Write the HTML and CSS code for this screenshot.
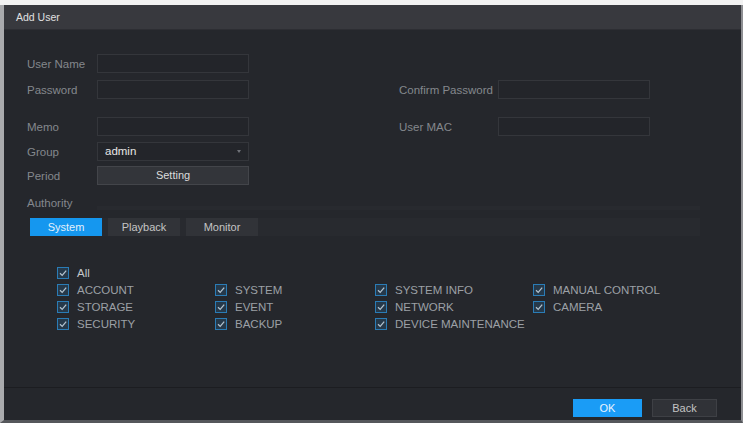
FILE: index.html
```html
<html>

<head>
    <link rel="stylesheet" href="styles.css">
</head>

<body>
    <div class="dialog">
        <div class="title">Add User</div>
        <div class="content">
            <div class="form">
                <div class="row r1">
                    <span class="lbl">User Name</span>
                    <span class="input"></span>
                </div>
                <div class="row r2">
                    <span class="lbl">Password</span>
                    <span class="input"></span>
                    <span class="lbl lbl-right">Confirm Password</span>
                    <span class="input"></span>
                </div>
                <div class="row r3">
                    <span class="lbl">Memo</span>
                    <span class="input"></span>
                    <span class="lbl lbl-right">User MAC</span>
                    <span class="input"></span>
                </div>
                <div class="row r4">
                    <span class="lbl">Group</span>
                    <span class="input select">admin<i class="arrow"></i></span>
                </div>
                <div class="row r5">
                    <span class="lbl">Period</span>
                    <span class="btn-setting">Setting</span>
                </div>
                <div class="row r6">
                    <span class="lbl">Authority</span>
                    <span class="auth-line"></span>
                </div>
            </div>

            <div class="tabs">
                <span class="tab active">System</span>
                <span class="tab">Playback</span>
                <span class="tab">Monitor</span>
            </div>

            <div class="checks">
                <label class="check all"><i class="box"></i>All</label>
                <label class="check"><i class="box"></i>ACCOUNT</label>
                <label class="check"><i class="box"></i>SYSTEM</label>
                <label class="check"><i class="box"></i>SYSTEM INFO</label>
                <label class="check"><i class="box"></i>MANUAL CONTROL</label>
                <label class="check"><i class="box"></i>STORAGE</label>
                <label class="check"><i class="box"></i>EVENT</label>
                <label class="check"><i class="box"></i>NETWORK</label>
                <label class="check"><i class="box"></i>CAMERA</label>
                <label class="check"><i class="box"></i>SECURITY</label>
                <label class="check"><i class="box"></i>BACKUP</label>
                <label class="check"><i class="box"></i>DEVICE MAINTENANCE</label>
            </div>

            <div class="footer">
                <span class="btn ok">OK</span>
                <span class="btn back">Back</span>
            </div>
        </div>
    </div>
</body>

</html>
```

FILE: styles.css
```css
body {
    margin: 0;
    background: #f2f2f2;
    font-family: 'Liberation Sans', Arial, sans-serif;
}

.dialog {
    height: 418px;
    margin-top: 5px;
    border-left: 4px solid #a9aaad;
    border-right: 2px solid #8d8e92;
    border-bottom: 3px solid #55575b;
    background: #25272c;
    display: flex;
    flex-direction: column;
    box-sizing: border-box;
}

.title {
    height: 24px;
    line-height: 24px;
    padding-left: 12px;
    background: #38393e;
    border-bottom: 1px solid #2d2e33;
    color: #e0e0e0;
    font-size: 10.5px;
}

.content {
    flex: 1;
    display: flex;
    flex-direction: column;
}

.form {
    padding-left: 23px;
}

.row {
    display: flex;
    align-items: center;
    height: 19px;
}

.r1 { margin-top: 24px; }
.r2 { margin-top: 7px; }
.r3 { margin-top: 18px; }
.r4 { margin-top: 6px; }
.r5 { margin-top: 5px; }
.r6 { margin-top: 8px; }

.lbl {
    width: 70px;
    color: #84878d;
    font-size: 11.5px;
}

.lbl-right {
    width: 99px;
    margin-left: 150px;
}

.input {
    width: 152px;
    height: 19px;
    box-sizing: border-box;
    border: 1px solid #34363b;
    background: #23252a;
}

.select {
    position: relative;
    padding-left: 7px;
    line-height: 17px;
    color: #e6e6e6;
    font-size: 11.5px;
}

.arrow {
    position: absolute;
    right: 7px;
    top: 7px;
    border-top: 3px solid #6f7278;
    border-left: 2px solid transparent;
    border-right: 2px solid transparent;
}

.btn-setting {
    width: 152px;
    height: 19px;
    box-sizing: border-box;
    border: 1px solid #43454a;
    background: #33353a;
    color: #dcdcdc;
    font-size: 11px;
    line-height: 17px;
    text-align: center;
}

.auth-line {
    width: 603px;
    height: 4px;
    margin-top: 10px;
    background: #282a2f;
}

.tabs {
    display: flex;
    gap: 6px;
    width: 670px;
    margin: 6px 0 0 26px;
    background: #282a2f;
}

.tab {
    width: 72px;
    height: 18px;
    line-height: 18px;
    text-align: center;
    background: #313338;
    color: #c4c4c4;
    font-size: 11px;
}

.tab.active {
    background: #1597ef;
    color: #e2f0fb;
}

.checks {
    display: grid;
    grid-template-columns: 158px 160px 158px auto;
    grid-auto-rows: 17px;
    margin: 28px 0 0 53px;
}

.check {
    display: flex;
    align-items: center;
    color: #9ca0a6;
    font-size: 11.5px;
}

.check.all {
    grid-column: 1 / 5;
    color: #c4c6ca;
}

.box {
    width: 12px;
    height: 12px;
    margin-right: 8px;
    box-sizing: border-box;
    border: 1px solid #2a7cb6;
    background: #26394a url("data:image/svg+xml;utf8,<svg xmlns='http://www.w3.org/2000/svg' width='10' height='10'><path d='M2 5.2 L4.2 7.4 L8.2 2.6' fill='none' stroke='%23b3c3cf' stroke-width='1.3'/></svg>") center no-repeat;
}

.footer {
    margin-top: auto;
    height: 33px;
    box-sizing: border-box;
    border-top: 1px solid #1c1d21;
    display: flex;
    justify-content: flex-end;
    gap: 10px;
    padding: 11px 24px 0 0;
}

.btn {
    height: 18px;
    line-height: 18px;
    text-align: center;
    font-size: 11px;
    box-sizing: border-box;
}

.ok {
    width: 69px;
    background: #1a9cf6;
    color: #e8f4fe;
}

.back {
    width: 65px;
    background: #303237;
    border: 1px solid #3e4045;
    line-height: 16px;
    color: #c4c4c4;
}
```
